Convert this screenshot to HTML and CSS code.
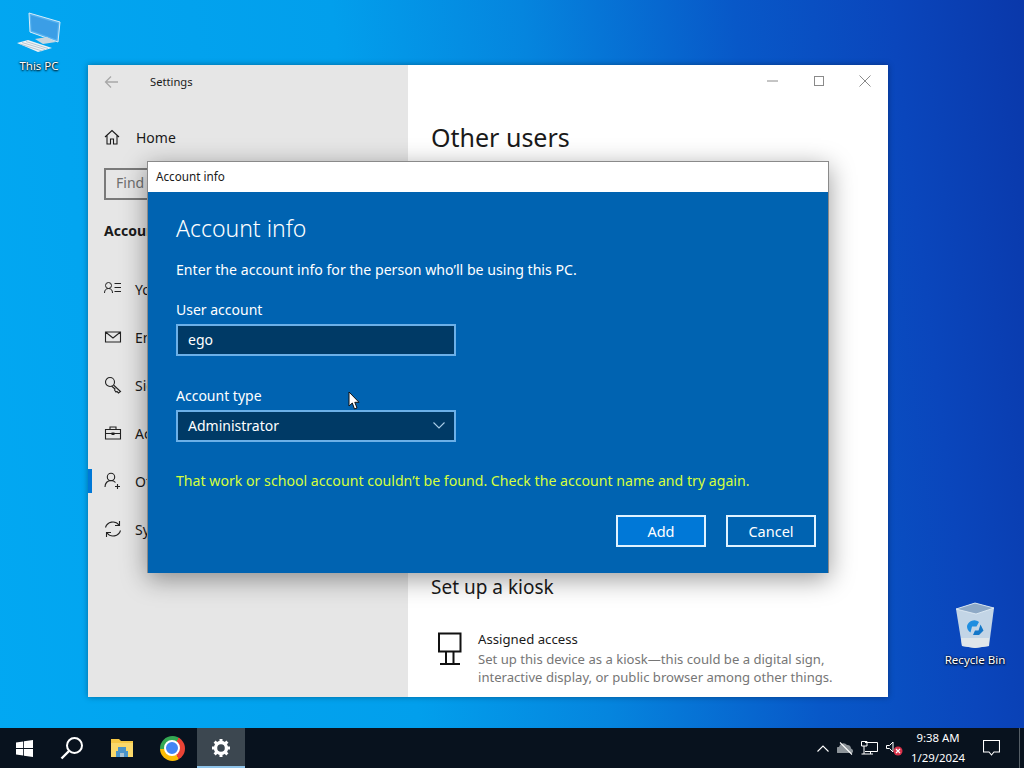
FILE: index.html
```html
<!DOCTYPE html>
<html lang="en">
<head>
<meta charset="utf-8">
<title>Settings - Account info</title>
<link rel="stylesheet" href="styles.css">
</head>
<body>
<div class="desktop">
  <div class="desk-icon desk-pc">
    <svg width="50" height="44" viewBox="14 11 50 44"><path d="M29 13 60 22 58 42 30 32Z" fill="#55b2f0" stroke="#d5ecfa" stroke-width="1"/><path d="M31 15.500 58 23.500 56.500 39.500 31.500 30.500Z" fill="#3b9ee6"/><path d="M35 39 47 37 56 42 43 44Z" fill="#c9d6de"/><path d="M17 43 28 40 52 48 38 52Z" fill="#eef3f6"/><path d="M22 42.500 45 49.500M26 41.500 48 48.500M20 44 42 51" stroke="#a9bcc9" stroke-width=".8"/></svg>
    <span class="desk-label">This PC</span>
  </div>
  <div class="desk-icon desk-bin">
    <svg width="42" height="46" viewBox="0 0 42 46"><path d="M2 7 21 1 40 6 35 44 21 46 8 44Z" fill="#c3d5e6"/><path d="M2 7 21 1 40 6 22 12Z" fill="#8ea9c6" stroke="#e6f0f8" stroke-width=".8"/><path d="M7 36 35 36 35 44 21 46 8 44Z" fill="#dfe6ea"/><path d="M13 24a7.500 7.500 0 0 1 12-4l-2.500 4.500H18l-1.500 6A7.500 7.500 0 0 1 13 24Z" fill="#1f8ee0"/><path d="M26.500 22.500 29.500 28.500 25 33H19l2-4.500h3.500Z" fill="#1477c8"/></svg>
    <span class="desk-label">Recycle Bin</span>
  </div>

  <section class="window">
    <aside class="sidebar">
      <div class="titlebar">
        <svg class="back" width="16" height="14" viewBox="0 0 16 14"><path d="M14 7H2M7 1.500 1.500 7 7 12.500" fill="none" stroke="#a8a8a8" stroke-width="1.300"/></svg>
        <span class="app-title">Settings</span>
      </div>
      <div class="nav-home">
        <svg width="16" height="16" viewBox="0 0 16 16"><path d="M1 8 8 1.500 15 8M3 6.500V15H6.500V10H9.500V15H13V6.500" fill="none" stroke="#1a1a1a" stroke-width="1.100"/></svg>
        <span>Home</span>
      </div>
      <div class="search">Find a setting</div>
      <div class="nav-heading">Accounts</div>
      <nav class="nav-list">
        <div class="nav-item">
          <svg width="18" height="16" viewBox="0 0 18 16"><circle cx="4.500" cy="4.500" r="3" fill="none" stroke="#222" stroke-width="1"/><path d="M.5 12c0-3 1.500-4.500 4-4.500s4 1.500 4 4.500M10.500 2.500H17M10.500 6.500H17M10.500 10.500H17" fill="none" stroke="#222" stroke-width="1"/></svg>
          <span>Your info</span>
        </div>
        <div class="nav-item">
          <svg width="18" height="16" viewBox="0 0 18 16"><path d="M1.500 3H16.500V13H1.500ZM1.500 3 9 9 16.500 3" fill="none" stroke="#222" stroke-width="1.100"/></svg>
          <span>Email &amp; accounts</span>
        </div>
        <div class="nav-item">
          <svg width="18" height="18" viewBox="0 0 18 18"><circle cx="6" cy="6" r="4.500" fill="none" stroke="#222" stroke-width="1.100"/><path d="M9.500 9 16.500 15.500 14.500 17 13 15.500 12 16 10.500 14 11 13 7.500 10" fill="none" stroke="#222" stroke-width="1.100"/></svg>
          <span>Sign-in options</span>
        </div>
        <div class="nav-item">
          <svg width="18" height="16" viewBox="0 0 18 16"><path d="M1.500 4.500H16.500V14H1.500ZM6 4.500V2H12V4.500M1.500 8.500H16.500" fill="none" stroke="#222" stroke-width="1.100"/><rect x="7.500" y="7.500" width="3" height="2.500" fill="#222"/></svg>
          <span>Access work or school</span>
        </div>
        <div class="nav-item nav-current">
          <svg width="18" height="18" viewBox="0 0 18 18"><circle cx="7" cy="5" r="3.700" fill="none" stroke="#222" stroke-width="1.100"/><path d="M1 15c0-4 2.500-6.500 6-6.500 2 0 3.500 .8 4.500 2M13.500 12V17M11 14.500H16" fill="none" stroke="#222" stroke-width="1.100"/></svg>
          <span>Other users</span>
        </div>
        <div class="nav-item">
          <svg width="18" height="18" viewBox="0 0 18 18"><path d="M1.500 7.500A7.700 7.700 0 0 1 15 5M16.500 10.500A7.700 7.700 0 0 1 3 13M15.500 1V5.500H11M2.500 17V12.500H7" fill="none" stroke="#222" stroke-width="1.100"/></svg>
          <span>Sync your settings</span>
        </div>
      </nav>
    </aside>
    <main class="content">
      <div class="win-controls">
        <svg width="12" height="12" viewBox="0 0 12 12"><path d="M0 6H11" stroke="#8a8a8a"/></svg>
        <svg width="12" height="12" viewBox="0 0 12 12"><rect x="1.500" y="1.500" width="9" height="9" fill="none" stroke="#8a8a8a"/></svg>
        <svg width="12" height="12" viewBox="0 0 12 12"><path d="M.5 .5 11.500 11.500M11.500 .5 .5 11.500" stroke="#8a8a8a"/></svg>
      </div>
      <h1 class="page-title">Other users</h1>
      <h2 class="section-title">Set up a kiosk</h2>
      <div class="kiosk">
        <svg width="26" height="34" viewBox="0 0 26 34"><path d="M2 1.500H23.500V19.500H2ZM9 19.500V31M16.500 19.500V31M3 32H23" fill="none" stroke="#111" stroke-width="2"/></svg>
        <div class="kiosk-text">
          <div class="kiosk-name">Assigned access</div>
          <p class="kiosk-desc">Set up this device as a kiosk—this could be a digital sign, interactive display, or public browser among other things.</p>
        </div>
      </div>
    </main>
  </section>

  <section class="dialog">
    <div class="dialog-title">Account info</div>
    <div class="dialog-body">
      <h2 class="dialog-heading">Account info</h2>
      <p class="dialog-intro">Enter the account info for the person who’ll be using this PC.</p>
      <label class="field-label">User account</label>
      <div class="field">ego</div>
      <label class="field-label field-label-second">Account type</label>
      <div class="field field-select">
        <span>Administrator</span>
        <svg width="12" height="7" viewBox="0 0 12 7"><path d="M.5 .5 6 6 11.500 .5" fill="none" stroke="#a9cde8" stroke-width="1.100"/></svg>
      </div>
      <p class="error">That work or school account couldn’t be found. Check the account name and try again.</p>
      <div class="actions">
        <button class="btn btn-primary">Add</button>
        <button class="btn">Cancel</button>
      </div>
    </div>
  </section>

  <svg class="cursor" width="12" height="20" viewBox="0 0 12 20"><path d="M1 1V15L4.300 12 6.500 18 9 17 6.800 11.300H11Z" fill="#fff" stroke="#111" stroke-width="1"/></svg>

  <footer class="taskbar">
    <div class="task-btn">
      <svg width="17" height="17" viewBox="0 0 17 17"><path d="M0 2.400 7.200 1.400V8H0ZM8 1.300 17 0V8H8ZM0 9H7.200V15.600L0 14.600ZM8 9H17V17L8 15.700Z" fill="#fff"/></svg>
    </div>
    <div class="task-btn">
      <svg width="24" height="24" viewBox="0 0 24 24"><circle cx="14.500" cy="9.500" r="7.500" fill="none" stroke="#fff" stroke-width="2"/><path d="M9 15 1.500 22.500" stroke="#fff" stroke-width="2.400"/></svg>
    </div>
    <div class="task-btn task-files">
      <svg width="24" height="20" viewBox="0 0 24 20"><path d="M1 1H9L11 3H23V19H1Z" fill="#f6c845"/><path d="M1 5H23V19H1Z" fill="#fbd96a"/><path d="M8 9H16V13H18V19H6V13H8Z" fill="#4b94c9"/><path d="M10 15H14V19H10Z" fill="#a9c3d3"/></svg>
    </div>
    <div class="task-btn task-chrome"><span class="chrome"><span class="chrome-dot"></span></span></div>
    <div class="task-btn task-active">
      <svg width="20" height="20" viewBox="0 0 20 20"><circle cx="10" cy="10" r="5.500" fill="none" stroke="#fff" stroke-width="3.400"/><path d="M10 1V4M10 16V19M1 10H4M16 10H19M3.600 3.600 5.800 5.800M14.200 14.200 16.400 16.400M3.600 16.400 5.800 14.200M14.200 5.800 16.400 3.600" stroke="#fff" stroke-width="3"/></svg>
    </div>
    <div class="tray">
      <svg width="12" height="7" viewBox="0 0 12 7"><path d="M.5 6.500 6 1 11.500 6.500" fill="none" stroke="#fff" stroke-width="1.100"/></svg>
      <svg width="16" height="13" viewBox="0 0 16 13"><path d="M1 11a3 3 0 0 1 1-6 4.500 4.500 0 0 1 8-2 3.500 3.500 0 0 1 4 3.500 2.500 2.500 0 0 1 1 4.500Z" fill="#8d949a"/><path d="M3 .5 15 12.500" stroke="#fff" stroke-width="1.100"/></svg>
      <svg width="17" height="14" viewBox="0 0 17 14"><path d="M4 1.500H16.500V10.500H4M.5 .5H6V5H.5ZM3 5V13M.5 13H12M9.500 10.500V13" fill="none" stroke="#fff" stroke-width="1"/></svg>
      <svg width="17" height="15" viewBox="0 0 17 15"><path d="M.5 4.500H3.500L7 1V11L3.500 7.500H.5Z" fill="none" stroke="#fff"/><circle cx="12" cy="10" r="4.500" fill="#d9324a"/><path d="M10 8 14 12M14 8 10 12" stroke="#fff" stroke-width="1.200"/></svg>
    </div>
    <div class="clock"><span>9:38 AM</span><span>1/29/2024</span></div>
    <svg class="notify" width="17" height="16" viewBox="0 0 17 16"><path d="M.5 .5H16.500V12H11L8.500 15 6 12H.5Z" fill="none" stroke="#fff" stroke-width="1.100"/></svg>
    <div class="show-desktop"></div>
  </footer>
</div>
</body>
</html>
```
FILE: styles.css
```css
* { box-sizing: border-box; }
html, body { margin: 0; height: 100%; overflow: hidden; }
body { font-family: "Noto Sans", "Liberation Sans", sans-serif; font-size: 14px; color: #1a1a1a; }
h1, h2, p { margin: 0; font-weight: 400; }

.desktop {
  position: relative;
  width: 1024px;
  height: 768px;
  overflow: hidden;
  background: linear-gradient(83deg, #02a8f2 0%, #029fec 38%, #0585de 55%, #0858c8 74%, #0a46bc 88%, #0a38aa 100%);
}

.desk-icon { position: absolute; display: flex; flex-direction: column; align-items: center; width: 76px; }
.desk-pc { left: 1px; top: 11px; }
.desk-bin { left: 937px; top: 602px; }
.desk-label { color: #fff; font-size: 11.500px; line-height: 16px; margin-top: 3px; text-shadow: 0 1px 2px #000, 0 0 2px #000; }
.desk-bin .desk-label { margin-top: 4px; }

.window {
  position: absolute;
  left: 88px;
  top: 65px;
  width: 800px;
  height: 632px;
  display: flex;
  background: #fff;
  box-shadow: 0 0 6px rgba(0,0,0,.35);
}
.sidebar { width: 320px; background: #e6e6e6; flex: none; padding-left: 16px; white-space: nowrap; }
.titlebar { display: flex; align-items: center; height: 33px; }
.back { margin-right: 30px; }
.app-title { font-size: 11.200px; }
.nav-home { display: flex; align-items: center; gap: 16px; height: 24px; margin-top: 27px; }
.search { width: 250px; height: 32px; margin-top: 19px; border: 2px solid #7a7a7a; padding-left: 10px; line-height: 26px; color: #6f6f6f; }
.nav-heading { font-weight: 700; margin-top: 19px; line-height: 24px; }
.nav-list { margin: 22px 0 0 -16px; }
.nav-item { position: relative; display: flex; align-items: center; gap: 13px; height: 48px; padding-left: 16px; }
.nav-item svg { flex: none; }
.nav-current::before { content: ""; position: absolute; left: 0; top: 12px; width: 4px; height: 24px; background: #0078d7; }

.content { flex: 1; padding-left: 23px; display: flex; flex-direction: column; }
.win-controls { display: flex; justify-content: flex-end; align-items: center; gap: 34px; height: 32px; padding-right: 17px; }
.page-title { font-size: 25px; line-height: 36px; margin-top: 22px; }
.section-title { font-size: 19px; line-height: 28px; margin-top: 418px; }
.kiosk { display: flex; gap: 15px; margin-top: 28px; padding-left: 6px; }
.kiosk svg { margin-top: 3px; flex: none; }
.kiosk-name { font-size: 13.200px; line-height: 20px; }
.kiosk-desc { width: 372px; font-size: 13.100px; line-height: 18px; margin-top: 1px; color: #767676; }

.dialog {
  position: absolute;
  left: 147px;
  top: 161px;
  width: 682px;
  height: 412px;
  display: flex;
  flex-direction: column;
  border: 1px solid #8a8a8a;
  border-bottom: 0;
  box-shadow: 0 6px 24px rgba(0,0,0,.4);
}
.dialog-title { height: 30px; flex: none; padding: 0 0 1px 8px; background: #fff; font-size: 11.700px; line-height: 28px; }
.dialog-body { flex: 1; background: #0063b1; color: #fff; padding: 0 12px 0 28px; display: flex; flex-direction: column; }
.dialog-heading { font-size: 23px; line-height: 32px; margin-top: 20px; font-weight: 300; }
.dialog-intro { font-size: 14.150px; line-height: 20px; margin-top: 16px; }
.field-label { font-size: 14px; line-height: 20px; margin-top: 20px; }
.field-label-second { margin-top: 30px; }
.field { width: 280px; height: 32px; margin-top: 4px; border: 2px solid #6cb0e8; background: #003a66; padding: 0 10px 1px; line-height: 27px; font-size: 14px; display: flex; justify-content: space-between; align-items: center; }
.field-select svg { margin-right: -1px; }
.error { color: #d6ff3c; font-size: 14.150px; line-height: 20px; margin-top: 29px; }
.actions { display: flex; justify-content: flex-end; gap: 20px; margin-top: 24px; }
.btn { width: 90px; height: 32px; border: 2px solid #dff2ff; background: #0063b1; color: #fff; font: inherit; font-size: 14.500px; padding: 0; }
.btn-primary { background: #0078d7; }

.cursor { position: absolute; left: 348px; top: 391px; }

.taskbar {
  position: absolute;
  left: 0;
  right: 0;
  bottom: 0;
  height: 40px;
  display: flex;
  align-items: center;
  background: #08121e;
  color: #fff;
}
.task-btn { width: 48px; height: 40px; display: flex; align-items: center; justify-content: center; flex: none; }
.task-files { margin-left: 2px; }
.task-chrome { margin-left: 2px; }
.task-active { margin-left: 1px; background: #3c4750; border-bottom: 2px solid #8fc4ea; padding-top: 1px; }
.chrome { width: 25px; height: 25px; border-radius: 50%; display: flex; align-items: center; justify-content: center; background: conic-gradient(from 30deg, #ea4335 0 120deg, #fbbc05 120deg 240deg, #34a853 240deg 360deg); }
.chrome-dot { width: 12px; height: 12px; border-radius: 50%; background: #4285f4; border: 2px solid #fff; box-sizing: content-box; }
.tray { margin-left: auto; display: flex; align-items: center; gap: 8px; }
.clock { width: 70px; display: flex; flex-direction: column; align-items: center; font-size: 11.400px; line-height: 20px; }
.notify { margin-left: 10px; }
.show-desktop { width: 1px; height: 40px; margin-left: 19px; margin-right: 4px; background: #555e66; }
```
